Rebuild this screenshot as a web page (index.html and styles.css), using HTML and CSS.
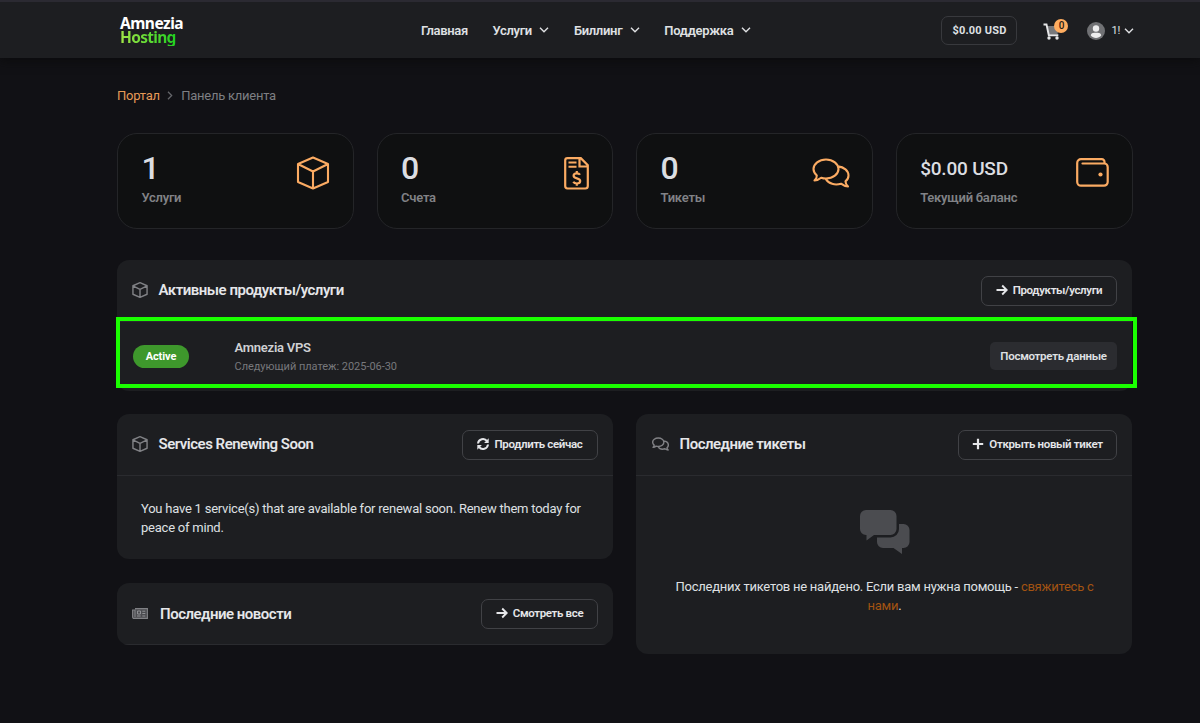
FILE: index.html
```html
<!DOCTYPE html>
<html lang="ru">
<head>
<meta charset="utf-8">
<title>Amnezia Hosting</title>
<link rel="stylesheet" href="styles.css">
</head>
<body>
<svg class="defs" width="0" height="0">
  <symbol id="cube" viewBox="0 0 34 34"><path d="M17 1.500 32 8v18L17 32.500 2 26V8zM2 8l15 7.500L32 8M17 15.500v17" fill="none" stroke="currentColor" stroke-linejoin="round"/></symbol>
  <symbol id="chats" viewBox="0 0 38 30"><path d="M2.500 22.500C4.500 20.500 5 19 4.800 17.500 2.700 15.500 1.500 13.500 1.500 11 1.500 5.800 7 1.500 14 1.500S26.500 5.800 26.500 11 21 20.500 14 20.500c-1.800 0-3.400-.3-4.800-.8-2 1.600-4.400 2.700-6.700 2.800zM26 8.400c6 .6 10.500 4.200 10.500 9 0 2.500-1.200 4.500-3 6 0 1.700.6 3 2.500 5.100-2.600 0-5-1.300-7-2.800-6 1.800-12.500.2-15.300-5" fill="none" stroke="currentColor" stroke-linejoin="round"/></symbol>
  <symbol id="chev" viewBox="0 0 10 6"><path d="M1 .8l4 4 4-4" fill="none" stroke="currentColor" stroke-width="1.400"/></symbol>
  <symbol id="arrow" viewBox="0 0 12 12"><path d="M.5 6h10M6.200 1.500 10.700 6l-4.500 4.500" fill="none" stroke="currentColor" stroke-width="1.900"/></symbol>
</svg>
<header class="header">
  <div class="container bar">
    <a class="logo"><span class="logo-white">Amnezia</span><span class="logo-green">Hosting</span></a>
    <nav class="nav">
      <a>Главная</a>
      <a>Услуги<svg class="chev"><use href="#chev"/></svg></a>
      <a>Биллинг<svg class="chev"><use href="#chev"/></svg></a>
      <a>Поддержка<svg class="chev"><use href="#chev"/></svg></a>
    </nav>
    <div class="tools">
      <a class="balance">$0.00 USD</a>
      <a class="cart"><svg width="18" height="18" viewBox="0 0 18 18"><path d="M4 3h12.500l-2 8H5.500z" fill="#77787b"/><path d="M.5 1.500h3l2.300 10.800h9.500" fill="none" stroke="#e6e6e8" stroke-width="1.900"/><circle cx="6" cy="15" r="1.700" fill="#e6e6e8"/><circle cx="14" cy="15" r="1.700" fill="#e6e6e8"/></svg><span class="count">0</span></a>
      <a class="user"><svg width="18" height="18" viewBox="0 0 18 18"><circle cx="9" cy="9" r="9" fill="#707174"/><circle cx="9" cy="6.500" r="3.200" fill="#ededee"/><path d="M3.800 13.500c0-2 2-2.700 3.500-2.700h3.400c1.500 0 3.500.7 3.500 2.700C13 15 11 15.900 9 15.900S5 15 3.800 13.500z" fill="#ededee"/></svg><span>1!</span><svg class="chev"><use href="#chev"/></svg></a>
    </div>
  </div>
</header>
<main class="container main">
  <div class="crumbs"><a>Портал</a><svg width="6" height="9" viewBox="0 0 5 8"><path d="M.7.700 4 4 .7 7.300" fill="none" stroke="#66676b" stroke-width="1.100"/></svg><span>Панель клиента</span></div>
  <section class="stats">
    <a class="stat"><div><div class="num one">1</div><div class="label">Услуги</div></div><svg class="i-cube"><use href="#cube"/></svg></a>
    <a class="stat"><div><div class="num">0</div><div class="label">Счета</div></div><svg class="i-doc" viewBox="0 0 25 33"><path d="M3.500 1.200h13.300l7 7V29a2.500 2.500 0 0 1-2.500 2.500H3.500A2.500 2.500 0 0 1 1.200 29V3.500a2.300 2.300 0 0 1 2.300-2.300zM15.500 1.500v8h8" fill="none" stroke="currentColor" stroke-width="2.200"/><path d="M4.500 5.500h8M4.500 9.700h8" stroke="currentColor" stroke-width="1.900"/><path d="M16 17.800c-.6-1-1.800-1.500-3.200-1.500-1.800 0-3.200.9-3.200 2.500 0 3.400 6.600 1.800 6.600 5.200 0 1.600-1.500 2.500-3.300 2.500-1.600 0-3-.6-3.600-1.700M12.800 14v2.500M12.800 26v2.700" fill="none" stroke="currentColor" stroke-width="2.200"/></svg></a>
    <a class="stat"><div><div class="num">0</div><div class="label">Тикеты</div></div><svg class="i-chat"><use href="#chats"/></svg></a>
    <a class="stat"><div><div class="num money">$0.00 USD</div><div class="label">Текущий баланс</div></div><svg class="i-wallet" viewBox="0 0 33 29"><path d="M28.500 4.800V4A2.700 2.700 0 0 0 25.800 1.200H5A3.800 3.800 0 0 0 1.200 5v19A3.800 3.800 0 0 0 5 27.700h23a3.700 3.700 0 0 0 3.700-3.700V9A3.500 3.500 0 0 0 28.200 5.500H6.500" fill="none" stroke="currentColor" stroke-width="2.200" stroke-linecap="round"/><circle cx="24.500" cy="16.500" r="2.100" fill="currentColor"/></svg></a>
  </section>
  <section class="panel active-panel">
    <div class="head"><svg class="h-cube"><use href="#cube"/></svg><h2>Активные продукты/услуги</h2><a class="btn b1"><svg class="ico"><use href="#arrow"/></svg>Продукты/услуги</a></div>
    <div class="service"><span class="badge">Active</span><div class="info"><div class="name">Amnezia VPS</div><div class="due">Следующий платеж: 2025-06-30</div></div><a class="details">Посмотреть данные</a></div>
    <div class="highlight"></div>
  </section>
  <div class="columns">
    <div class="left">
      <section class="panel renew">
        <div class="head"><svg class="h-cube"><use href="#cube"/></svg><h2 class="t2">Services Renewing Soon</h2><a class="btn b2"><svg class="ico" viewBox="0 0 12 12"><path d="M1 5.500a5 5 0 0 1 9-2.400M11 6.500a5 5 0 0 1-9 2.400" fill="none" stroke="currentColor" stroke-width="2"/><path d="M11.700.3v4.600H7.100zM.3 11.700V7.100h4.600z" fill="currentColor"/></svg>Продлить сейчас</a></div>
        <p class="body">You have 1 service(s) that are available for renewal soon. Renew them today for peace of mind.</p>
      </section>
      <section class="panel news">
        <div class="head"><svg class="h-news" viewBox="0 0 16 11"><path d="M3 .6h12.400v9.800H2A1.400 1.400 0 0 1 .6 9V2H3v7" fill="#4c4d51" stroke="currentColor" stroke-width="1.100"/><path d="M5.500 3h3v3h-3zM10.300 3.200h3M10.300 5.500h3M5 8h3.700M10.300 8h3" fill="none" stroke="#909195"/></svg><h2 class="t4">Последние новости</h2><a class="btn b4"><svg class="ico"><use href="#arrow"/></svg>Смотреть все</a></div>
      </section>
    </div>
    <section class="panel tickets">
      <div class="head"><svg class="h-chat"><use href="#chats"/></svg><h2 class="t3">Последние тикеты</h2><a class="btn b3"><svg class="ico" viewBox="0 0 12 12"><path d="M6 .8v10.400M.8 6h10.400" stroke="currentColor" stroke-width="2.200"/></svg>Открыть новый тикет</a></div>
      <div class="empty">
        <svg width="50" height="44" viewBox="0 0 50 44"><path d="M6 0h24.500a6 6 0 0 1 6 6v13a6 6 0 0 1-6 6H14L6.500 30.500V25H6a6 6 0 0 1-6-6V6a6 6 0 0 1 6-6z"/><path d="M39 14h4.500a6 6 0 0 1 6 6v12a6 6 0 0 1-6 6H42v6l-8.500-6H23a6 6 0 0 1-6-6v-4.500h13.500A8.500 8.500 0 0 0 39 19z"/></svg>
        <p>Последних тикетов не найдено. Если вам нужна помощь - <a>свяжитесь с нами</a>.</p>
      </div>
    </section>
  </div>
</main>
</body>
</html>
```
FILE: styles.css
```css
* { box-sizing: border-box; }
body { margin: 0; height: 723px; overflow: hidden; background: #111115; color: #dfe0e3; font: 13px/19px Roboto, sans-serif; letter-spacing: -.25px; }
.defs { position: absolute; }
.container { width: 1015px; margin-left: 117px; }
.header { height: 58px; background: #1d1e21; border-top: 2px solid #2b2a32; box-shadow: 0 2px 10px #0b0b0c; }
.bar { width: 1017px; height: 56px; display: flex; align-items: center; padding-left: 3px; }
.logo { width: 301px; display: flex; flex-direction: column; align-items: flex-start; font: 700 15.500px/14px "Noto Sans", sans-serif; color: #fff; letter-spacing: -.5px; padding-top: 2px; }
.logo-white { line-height: 12px; }
.logo-green { background: linear-gradient(90deg, #a2e548, #20d020); background-clip: text; -webkit-background-clip: text; color: transparent; line-height: 17px; letter-spacing: -.7px; }
.nav { display: flex; gap: 24.500px; font-weight: 600; letter-spacing: -.3px; align-items: center; }
.nav a { display: flex; align-items: center; gap: 7.500px; white-space: nowrap; }
.chev { width: 10px; height: 6px; }
.tools { margin-left: auto; display: flex; align-items: center; }
.balance { width: 76px; height: 29px; margin-top: 1px; border: 1px solid #38393d; border-radius: 7px; text-align: center; font: 700 11px/28px Roboto, sans-serif; letter-spacing: .2px; }
.cart { position: relative; width: 18px; height: 18px; margin: 3px 0 0 26px; }
.cart svg { display: block; }
.count { position: absolute; left: 11px; top: -4px; width: 14px; height: 14px; border-radius: 50%; background: #ffad60; color: #251b13; font: 500 10px/14px Roboto, sans-serif; text-align: center; }
.user { display: flex; align-items: center; margin: 1px 0 0 26px; font-size: 11px; }
.user span { margin: 0 4px 0 6px; }
.crumbs { display: flex; align-items: center; height: 19px; margin-top: 28px; color: #7e7f83; }
.crumbs a { color: #e79a57; }
.crumbs svg { margin: 0 8px 0 7.500px; }
.stats { display: grid; grid-template-columns: repeat(4, 1fr); gap: 22.700px; width: 1015.500px; margin-top: 28px; }
.stat { height: 96px; border: 1px solid #242528; border-radius: 20px; background: #0f1011; display: flex; justify-content: space-between; align-items: flex-start; padding: 22px 23px 0 23.500px; }
.stat svg { color: #fbab63; flex: none; }
.num { font: 500 32px/24px Roboto, sans-serif; letter-spacing: -1px; color: #dcdee2; height: 32px; }
.money { font-size: 19px; line-height: 25px; letter-spacing: -.2px; }
.label { font-weight: 600; color: #818286; }
.i-cube { width: 34px; height: 34px; stroke-width: 2.100; }
.i-doc { width: 25px; height: 33px; margin-top: 1px; }
.i-chat { width: 38px; height: 30px; margin-top: 2px; stroke-width: 2.100; margin-right: -1px; }
.i-wallet { width: 33px; height: 29px; margin-top: 2px; }
.panel { background: #1d1e21; border-radius: 12px; }
.active-panel { position: relative; height: 131px; margin-top: 31px; }
.head { height: 62px; display: flex; align-items: center; padding: 0 15px; border-bottom: 1px solid #2a2b2f; color: #e5e6e9; }
.head > svg { color: #808185; flex: none; }
.head h2 { margin: 0 0 0 10.500px; font: 600 15px/20px Roboto, sans-serif; letter-spacing: -.49px; white-space: nowrap; padding-bottom: 2px; }
.h-cube { width: 16px; height: 16px; stroke-width: 3; margin-bottom: 2px; }
.h-chat { width: 17px; height: 14px; stroke-width: 3.200; margin-bottom: 2px; }
.btn { margin-left: auto; height: 30px; border: 1px solid #414246; border-radius: 7px; display: flex; align-items: center; justify-content: center; gap: 5px; font: 600 11.500px/26px Roboto, sans-serif; letter-spacing: -.35px; white-space: nowrap; padding-bottom: 2px; }
.ico { width: 12px; height: 12px; }
.b1 { width: 136px; }
.b2 { width: 136px; }
.b3 { width: 159px; }
.b4 { width: 117px; }
.service { height: 69px; display: flex; align-items: center; padding: 0 15px 1px 16px; }
.badge { width: 56px; height: 23px; border-radius: 12px; background: #3e982c; color: #fff; text-align: center; font: 700 11px/23px Roboto, sans-serif; letter-spacing: -.1px; }
.info { margin-left: 45.500px; padding-top: 1px; }
.name { font-weight: 600; color: #cfd0d3; letter-spacing: -.25px; }
.due { font-size: 11px; color: #77787c; letter-spacing: -.03px; }
.details { margin-left: auto; width: 127px; height: 28px; border-radius: 5px; background: #2b2c30; text-align: center; font: 600 11.500px/28px Roboto, sans-serif; letter-spacing: -.28px; }
.highlight { position: absolute; left: -1px; top: 57px; width: 1021px; height: 71px; border: 4px solid #1aff00; }
.columns { display: grid; grid-template-columns: 1fr 1fr; gap: 23px; margin-top: 23px; align-items: start; }
.renew { height: 145px; }
.body { margin: 0; padding: 23px 24px; letter-spacing: -.23px; }
.news { height: 62px; margin-top: 24px; overflow: hidden; }
.h-news { width: 16px; height: 11px; }
.tickets { height: 240px; }
.tickets .head { padding-left: 16px; }
.empty { padding: 34px 35px 34px 36px; text-align: center; }
.empty svg { display: block; margin: 0 auto; fill: #4b4c50; }
.empty p { margin: 23px 0 0; }
.empty a { color: #a35312; }
.head .t4 { margin-left: 12px; padding-bottom: 0; }
```
